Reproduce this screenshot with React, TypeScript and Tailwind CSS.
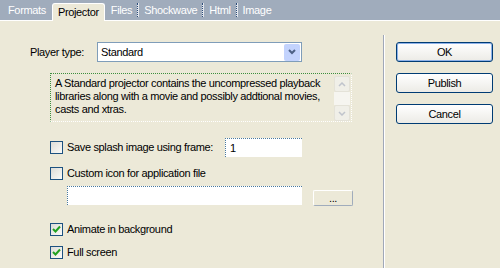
import type { ReactNode } from "react";

const font = { fontFamily: '"Liberation Sans", Arial, sans-serif' };

function Tab({ label, active, sep }: { label: string; active?: boolean; sep?: boolean }) {
  if (active) {
    return (
      <div className="relative -mb-px ml-px flex h-[18px] items-center self-end rounded-t-[3px] border border-b-0 border-white bg-[#ece9d8] px-[5px] text-black">
        {label}
      </div>
    );
  }
  return (
    <div className="flex h-[20px] items-center">
      <span className="px-[5px] text-white">{label}</span>
      {sep && <span className="h-[14px] w-[2px] border-l border-dotted border-[#2c4c7a] bg-white/70" />}
    </div>
  );
}

function Check({ checked, children }: { checked?: boolean; children: ReactNode }) {
  return (
    <div className="flex items-center">
      <span className="flex h-[13px] w-[13px] items-center justify-center border border-[#1c5180] bg-gradient-to-br from-[#dcdcd7] to-[#fbfbf9]">
        {checked && (
          <svg width="9" height="9" viewBox="0 0 9 9">
            <path d="M1 4 L3.5 6.5 L8 1.5" fill="none" stroke="#21a121" strokeWidth="2" />
          </svg>
        )}
      </span>
      <span className="ml-[4px] leading-none">{children}</span>
    </div>
  );
}

function XpButton({ label, focused }: { label: string; focused?: boolean }) {
  return (
    <button
      className={`flex h-[20px] w-[97px] items-center justify-center rounded-[3px] border border-[#003c74] bg-gradient-to-b from-white to-[#ecebe6] text-black ${
        focused ? "shadow-[inset_0_0_0_1px_#8eb2e9]" : ""
      }`}
    >
      {label}
    </button>
  );
}

export default function App() {
  return (
    <div
      className="flex h-[268px] w-[500px] flex-col overflow-hidden bg-[#ece9d8] text-[11px] tracking-[-0.35px] text-black"
      style={font}
    >
      <div className="flex h-[20px] items-end bg-[#a0acbc] pl-[3px]">
        <Tab label="Formats" />
        <Tab label="Projector" active />
        <div className="w-px" />
        <Tab label="Files" sep />
        <Tab label="Shockwave" sep />
        <Tab label="Html" sep />
        <Tab label="Image" />
      </div>

      <div className="flex flex-1 border-t border-white">
        <div className="flex w-[383px] flex-col pt-[21px]">
          <div className="flex items-center">
            <span className="ml-[30px] w-[67px]">Player type:</span>
            <div className="flex h-[20px] w-[205px] items-center justify-between border border-[#7f9db9] bg-white pl-[3px] pr-px">
              <span>Standard</span>
              <span className="flex h-[17px] w-[16px] items-center justify-center rounded-[2px] bg-[#c3d3fd]">
                <svg width="8" height="6" viewBox="0 0 8 6">
                  <path d="M1 1 L4 4 L7 1" fill="none" stroke="#4d6185" strokeWidth="2" />
                </svg>
              </span>
            </div>
          </div>

          <div className="ml-[50px] mt-[11px] flex h-[49px] w-[302px] border border-dotted border-[#3d8f3d] border-b-white border-r-white">
            <p className="flex-1 pl-[4px] pt-[3px] leading-[13px]">
              A Standard projector contains the uncompressed playback libraries along with a movie and possibly addtional movies, casts and xtras.
            </p>
            <div className="mr-px mt-[2px] flex w-[16px] flex-col">
              <span className="flex h-[16px] items-center justify-center rounded-[2px] border border-[#e4e2d8] bg-[#f0efe8]">
                <svg width="8" height="5" viewBox="0 0 8 5">
                  <path d="M1 4 L4 1 L7 4" fill="none" stroke="#c0c4cc" strokeWidth="1.5" />
                </svg>
              </span>
              <span className="flex-1 bg-[#f6f5f0]" />
              <span className="flex h-[16px] items-center justify-center rounded-[2px] border border-[#e4e2d8] bg-[#f0efe8]">
                <svg width="8" height="5" viewBox="0 0 8 5">
                  <path d="M1 1 L4 4 L7 1" fill="none" stroke="#c0c4cc" strokeWidth="1.5" />
                </svg>
              </span>
            </div>
          </div>

          <div className="ml-[50px] mt-[16px] flex h-[19px] items-center">
            <div className="w-[175px]">
              <Check>Save splash image using frame:</Check>
            </div>
            <div className="flex h-[19px] w-[77px] items-center border-l border-t border-dotted border-[#4a7aa0] border-b-[#e6e4da] border-r-[#e6e4da] bg-white pl-[4px]">
              1
            </div>
          </div>

          <div className="ml-[50px] mt-[10px]">
            <Check>Custom icon for application file</Check>
          </div>

          <div className="ml-[67px] mt-[6px] flex items-start">
            <div className="h-[19px] w-[235px] border-l border-t border-dotted border-[#4a7aa0] border-b-[#e6e4da] border-r-[#e6e4da] bg-white" />
            <button className="ml-[11px] mt-[4px] flex h-[16px] w-[40px] items-center justify-center rounded-[2px] border border-white border-b-[#a0acbc] border-r-[#a0acbc] leading-none">
              ...
            </button>
          </div>

          <div className="ml-[50px] mt-[17px]">
            <Check checked>Animate in background</Check>
          </div>

          <div className="ml-[50px] mt-[10px]">
            <Check checked>Full screen</Check>
          </div>
        </div>

        <div className="mt-[14px] w-[2px] border-l border-[#a0a8b8] bg-white" />

        <div className="flex flex-col gap-[11px] pl-[11px] pt-[21px]">
          <XpButton label="OK" focused />
          <XpButton label="Publish" />
          <XpButton label="Cancel" />
        </div>
      </div>
    </div>
  );
}
